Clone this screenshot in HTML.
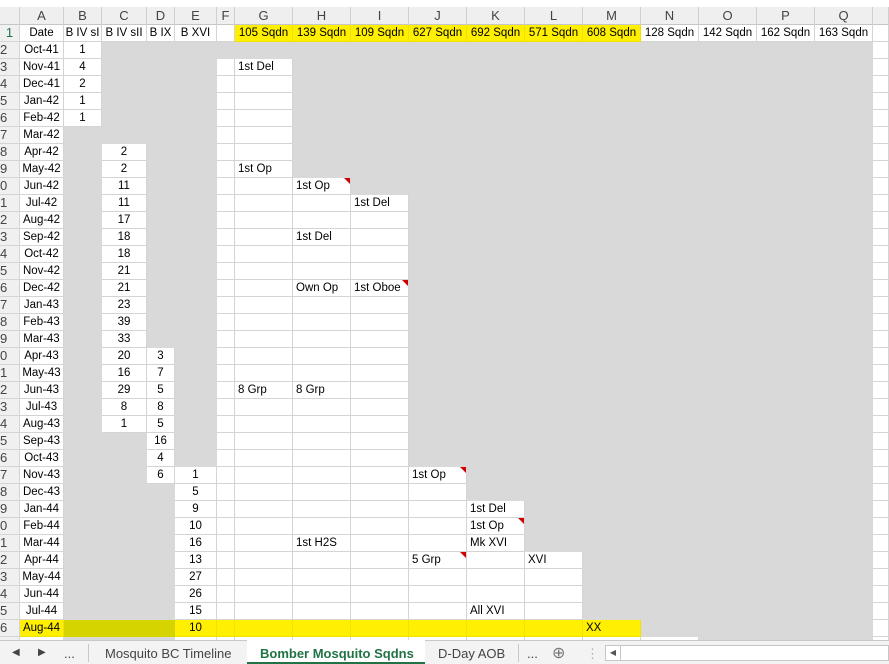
<!DOCTYPE html>
<html><head><meta charset="utf-8"><style>
*{margin:0;padding:0;box-sizing:border-box}
body{width:889px;height:664px;overflow:hidden;background:#fff;font-family:"Liberation Sans",Arial,sans-serif;font-size:11.5px;color:#000;position:relative}
.ch{position:absolute;top:7px;left:0;height:18px;display:flex;background:#efefef;border-bottom:1px solid #c6c6c6;width:889px}
.ch i{font-style:normal;height:18px;border-right:1px solid #cfcfcf;text-align:center;font-size:13px;line-height:18px;color:#444;flex:none}
.g{position:absolute;top:25px;left:0;width:889px}
.r{display:flex;height:17px}
.r i{font-style:normal;flex:none;height:17px;line-height:16px;border-right:1px solid #d9d9d9;border-bottom:1px solid #d9d9d9;background:#d9d9d9;white-space:nowrap;overflow:hidden;position:relative;padding-left:3px}
.ch i:nth-child(1),.r i:nth-child(1){width:20px}
.ch i:nth-child(2),.r i:nth-child(2){width:44px}
.ch i:nth-child(3),.r i:nth-child(3){width:38px}
.ch i:nth-child(4),.r i:nth-child(4){width:45px}
.ch i:nth-child(5),.r i:nth-child(5){width:28px}
.ch i:nth-child(6),.r i:nth-child(6){width:42px}
.ch i:nth-child(7),.r i:nth-child(7){width:18px}
.ch i:nth-child(n+8),.r i:nth-child(n+8){width:58px}
.ch i:nth-child(19),.r i:nth-child(19){width:16px}
.r i:nth-child(19){background:#fff;border-color:#d4d4d4}
.r i:nth-child(-n+6){text-align:center;padding-left:0}
.r i:nth-child(1){background:#f0f0f0;border-color:#d4d4d4;color:#444;text-align:left;padding-left:0;font-size:13px}
.r i.w{background:#fff;border-color:#d4d4d4}
.r i.y{background:#ffef00;border-color:#f2e200}
.r i.o{background:#d6d400;border-color:#d6d400}
.r1 i{text-align:center!important;padding-left:0!important}
.t::after{content:"";position:absolute;right:0;top:0;border-top:6px solid #d00000;border-left:6px solid transparent}
.tabs{position:absolute;left:0;top:640px;width:889px;height:24px;background:#f3f3f3;border-top:1px solid #c8c8c8;font-size:13px;color:#444}
.tabs span{position:absolute;top:5px}
.sep{position:absolute;top:3px;width:1px;height:18px;background:#c8c8c8}
</style></head><body>
<div class="ch"><i></i><i>A</i><i>B</i><i>C</i><i>D</i><i>E</i><i>F</i><i>G</i><i>H</i><i>I</i><i>J</i><i>K</i><i>L</i><i>M</i><i>N</i><i>O</i><i>P</i><i>Q</i><i></i></div>
<div class="g">
<div class="r r1"><i style="color:#217346">1</i><i class=w>Date</i><i class=w>B IV sI</i><i class=w>B IV sII</i><i class=w>B IX</i><i class=w>B XVI</i><i class=w></i><i class=y>105 Sqdn</i><i class=y>139 Sqdn</i><i class=y>109 Sqdn</i><i class=y>627 Sqdn</i><i class=y>692 Sqdn</i><i class=y>571 Sqdn</i><i class=y>608 Sqdn</i><i class=w>128 Sqdn</i><i class=w>142 Sqdn</i><i class=w>162 Sqdn</i><i class=w>163 Sqdn</i><i class=w></i></div>
<div class="r"><i>2</i><i class=w>Oct-41</i><i class=w>1</i><i></i><i></i><i></i><i></i><i></i><i></i><i></i><i></i><i></i><i></i><i></i><i></i><i></i><i></i><i></i><i class=w></i></div>
<div class="r"><i>3</i><i class=w>Nov-41</i><i class=w>4</i><i></i><i></i><i></i><i class=w></i><i class=w>1st Del</i><i></i><i></i><i></i><i></i><i></i><i></i><i></i><i></i><i></i><i></i><i class=w></i></div>
<div class="r"><i>4</i><i class=w>Dec-41</i><i class=w>2</i><i></i><i></i><i></i><i class=w></i><i class=w></i><i></i><i></i><i></i><i></i><i></i><i></i><i></i><i></i><i></i><i></i><i></i></div>
<div class="r"><i>5</i><i class=w>Jan-42</i><i class=w>1</i><i></i><i></i><i></i><i class=w></i><i class=w></i><i></i><i></i><i></i><i></i><i></i><i></i><i></i><i></i><i></i><i></i><i></i></div>
<div class="r"><i>6</i><i class=w>Feb-42</i><i class=w>1</i><i></i><i></i><i></i><i class=w></i><i class=w></i><i></i><i></i><i></i><i></i><i></i><i></i><i></i><i></i><i></i><i></i><i></i></div>
<div class="r"><i>7</i><i class=w>Mar-42</i><i></i><i></i><i></i><i></i><i class=w></i><i class=w></i><i></i><i></i><i></i><i></i><i></i><i></i><i></i><i></i><i></i><i></i><i></i></div>
<div class="r"><i>8</i><i class=w>Apr-42</i><i></i><i class=w>2</i><i></i><i></i><i class=w></i><i class=w></i><i></i><i></i><i></i><i></i><i></i><i></i><i></i><i></i><i></i><i></i><i></i></div>
<div class="r"><i>9</i><i class=w>May-42</i><i></i><i class=w>2</i><i></i><i></i><i class=w></i><i class=w>1st Op</i><i></i><i></i><i></i><i></i><i></i><i></i><i></i><i></i><i></i><i></i><i></i></div>
<div class="r"><i>0</i><i class=w>Jun-42</i><i></i><i class=w>11</i><i></i><i></i><i class=w></i><i class=w></i><i class="w t">1st Op</i><i></i><i></i><i></i><i></i><i></i><i></i><i></i><i></i><i></i><i></i></div>
<div class="r"><i>1</i><i class=w>Jul-42</i><i></i><i class=w>11</i><i></i><i></i><i class=w></i><i class=w></i><i class=w></i><i class=w>1st Del</i><i></i><i></i><i></i><i></i><i></i><i></i><i></i><i></i><i></i></div>
<div class="r"><i>2</i><i class=w>Aug-42</i><i></i><i class=w>17</i><i></i><i></i><i class=w></i><i class=w></i><i class=w></i><i class=w></i><i></i><i></i><i></i><i></i><i></i><i></i><i></i><i></i><i></i></div>
<div class="r"><i>3</i><i class=w>Sep-42</i><i></i><i class=w>18</i><i></i><i></i><i class=w></i><i class=w></i><i class=w>1st Del</i><i class=w></i><i></i><i></i><i></i><i></i><i></i><i></i><i></i><i></i><i></i></div>
<div class="r"><i>4</i><i class=w>Oct-42</i><i></i><i class=w>18</i><i></i><i></i><i class=w></i><i class=w></i><i class=w></i><i class=w></i><i></i><i></i><i></i><i></i><i></i><i></i><i></i><i></i><i></i></div>
<div class="r"><i>5</i><i class=w>Nov-42</i><i></i><i class=w>21</i><i></i><i></i><i class=w></i><i class=w></i><i class=w></i><i class=w></i><i></i><i></i><i></i><i></i><i></i><i></i><i></i><i></i><i></i></div>
<div class="r"><i>6</i><i class=w>Dec-42</i><i></i><i class=w>21</i><i></i><i></i><i class=w></i><i class=w></i><i class=w>Own Op</i><i class="w t">1st Oboe</i><i></i><i></i><i></i><i></i><i></i><i></i><i></i><i></i><i></i></div>
<div class="r"><i>7</i><i class=w>Jan-43</i><i></i><i class=w>23</i><i></i><i></i><i class=w></i><i class=w></i><i class=w></i><i class=w></i><i></i><i></i><i></i><i></i><i></i><i></i><i></i><i></i><i></i></div>
<div class="r"><i>8</i><i class=w>Feb-43</i><i></i><i class=w>39</i><i></i><i></i><i class=w></i><i class=w></i><i class=w></i><i class=w></i><i></i><i></i><i></i><i></i><i></i><i></i><i></i><i></i><i></i></div>
<div class="r"><i>9</i><i class=w>Mar-43</i><i></i><i class=w>33</i><i></i><i></i><i class=w></i><i class=w></i><i class=w></i><i class=w></i><i></i><i></i><i></i><i></i><i></i><i></i><i></i><i></i><i></i></div>
<div class="r"><i>0</i><i class=w>Apr-43</i><i></i><i class=w>20</i><i class=w>3</i><i></i><i class=w></i><i class=w></i><i class=w></i><i class=w></i><i></i><i></i><i></i><i></i><i></i><i></i><i></i><i></i><i></i></div>
<div class="r"><i>1</i><i class=w>May-43</i><i></i><i class=w>16</i><i class=w>7</i><i></i><i class=w></i><i class=w></i><i class=w></i><i class=w></i><i></i><i></i><i></i><i></i><i></i><i></i><i></i><i></i><i></i></div>
<div class="r"><i>2</i><i class=w>Jun-43</i><i></i><i class=w>29</i><i class=w>5</i><i></i><i class=w></i><i class=w>8 Grp</i><i class=w>8 Grp</i><i class=w></i><i></i><i></i><i></i><i></i><i></i><i></i><i></i><i></i><i></i></div>
<div class="r"><i>3</i><i class=w>Jul-43</i><i></i><i class=w>8</i><i class=w>8</i><i></i><i class=w></i><i class=w></i><i class=w></i><i class=w></i><i></i><i></i><i></i><i></i><i></i><i></i><i></i><i></i><i></i></div>
<div class="r"><i>4</i><i class=w>Aug-43</i><i></i><i class=w>1</i><i class=w>5</i><i></i><i class=w></i><i class=w></i><i class=w></i><i class=w></i><i></i><i></i><i></i><i></i><i></i><i></i><i></i><i></i><i></i></div>
<div class="r"><i>5</i><i class=w>Sep-43</i><i></i><i></i><i class=w>16</i><i></i><i class=w></i><i class=w></i><i class=w></i><i class=w></i><i></i><i></i><i></i><i></i><i></i><i></i><i></i><i></i><i></i></div>
<div class="r"><i>6</i><i class=w>Oct-43</i><i></i><i></i><i class=w>4</i><i></i><i class=w></i><i class=w></i><i class=w></i><i class=w></i><i></i><i></i><i></i><i></i><i></i><i></i><i></i><i></i><i></i></div>
<div class="r"><i>7</i><i class=w>Nov-43</i><i></i><i></i><i class=w>6</i><i class=w>1</i><i class=w></i><i class=w></i><i class=w></i><i class=w></i><i class="w t">1st Op</i><i></i><i></i><i></i><i></i><i></i><i></i><i></i><i></i></div>
<div class="r"><i>8</i><i class=w>Dec-43</i><i></i><i></i><i></i><i class=w>5</i><i class=w></i><i class=w></i><i class=w></i><i class=w></i><i class=w></i><i></i><i></i><i></i><i></i><i></i><i></i><i></i><i></i></div>
<div class="r"><i>9</i><i class=w>Jan-44</i><i></i><i></i><i></i><i class=w>9</i><i class=w></i><i class=w></i><i class=w></i><i class=w></i><i class=w></i><i class=w>1st Del</i><i></i><i></i><i></i><i></i><i></i><i></i><i></i></div>
<div class="r"><i>0</i><i class=w>Feb-44</i><i></i><i></i><i></i><i class=w>10</i><i class=w></i><i class=w></i><i class=w></i><i class=w></i><i class=w></i><i class="w t">1st Op</i><i></i><i></i><i></i><i></i><i></i><i></i><i></i></div>
<div class="r"><i>1</i><i class=w>Mar-44</i><i></i><i></i><i></i><i class=w>16</i><i class=w></i><i class=w></i><i class=w>1st H2S</i><i class=w></i><i class=w></i><i class=w>Mk XVI</i><i></i><i></i><i></i><i></i><i></i><i></i><i></i></div>
<div class="r"><i>2</i><i class=w>Apr-44</i><i></i><i></i><i></i><i class=w>13</i><i class=w></i><i class=w></i><i class=w></i><i class=w></i><i class="w t">5 Grp</i><i class=w></i><i class=w>XVI</i><i></i><i></i><i></i><i></i><i></i><i></i></div>
<div class="r"><i>3</i><i class=w>May-44</i><i></i><i></i><i></i><i class=w>27</i><i class=w></i><i class=w></i><i class=w></i><i class=w></i><i class=w></i><i class=w></i><i class=w></i><i></i><i></i><i></i><i></i><i></i><i></i></div>
<div class="r"><i>4</i><i class=w>Jun-44</i><i></i><i></i><i></i><i class=w>26</i><i class=w></i><i class=w></i><i class=w></i><i class=w></i><i class=w></i><i class=w></i><i class=w></i><i></i><i></i><i></i><i></i><i></i><i></i></div>
<div class="r"><i>5</i><i class=w>Jul-44</i><i></i><i></i><i></i><i class=w>15</i><i class=w></i><i class=w></i><i class=w></i><i class=w></i><i class=w></i><i class=w>All XVI</i><i class=w></i><i></i><i></i><i></i><i></i><i></i><i></i></div>
<div class="r"><i>6</i><i class=y>Aug-44</i><i class=o></i><i class=o></i><i class=o></i><i class=y>10</i><i class=y></i><i class=y></i><i class=y></i><i class=y></i><i class=y></i><i class=y></i><i class=y></i><i class=y>XX</i><i></i><i></i><i></i><i></i><i class=w></i></div>
<div class="r"><i>7</i><i class=w></i><i></i><i></i><i></i><i class=w></i><i class=w></i><i class=w></i><i class=w></i><i class=w></i><i class=w></i><i class=w></i><i class=w></i><i class=w></i><i class=w></i><i></i><i></i><i></i><i class=w></i></div>
</div>
<div class="tabs">
<span style="left:12px;font-size:10px;top:6px">◀</span><span style="left:38px;font-size:10px;top:6px">▶</span><span style="left:64px">...</span>
<div class="sep" style="left:88px"></div>
<span style="left:105px">Mosquito BC Timeline</span>
<div style="position:absolute;left:247px;top:-1px;width:178px;height:24px;background:#fff;border-bottom:2px solid #217346"></div>
<span style="left:260px;color:#217346;font-weight:bold">Bomber Mosquito Sqdns</span>
<span style="left:438px">D-Day AOB</span>
<div class="sep" style="left:518px"></div>
<span style="left:527px">...</span>
<span style="left:552px;top:2px;font-size:16px;color:#777">⊕</span>
<span style="left:586px;color:#aaa">⋮</span>
<div style="position:absolute;left:605px;top:4px;width:284px;height:16px;background:#fff;border:1px solid #c6c6c6"></div>
<div style="position:absolute;left:605px;top:4px;width:16px;height:16px;border:1px solid #c6c6c6;font-size:8px;line-height:14px;text-align:center;color:#555;background:#fff">◀</div>
</div>
</body></html>
